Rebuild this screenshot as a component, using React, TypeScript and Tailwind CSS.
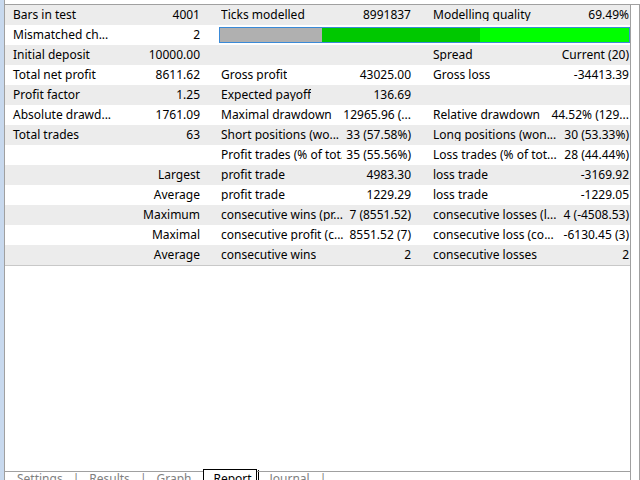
const rows: [string, string, string, string, string, string, boolean][] = [
  ["Bars in test", "4001", "Ticks modelled", "8991837", "Modelling quality", "69.49%", true],
  ["Mismatched ch...", "2", "", "", "", "", false],
  ["Initial deposit", "10000.00", "", "", "Spread", "Current (20)", true],
  ["Total net profit", "8611.62", "Gross profit", "43025.00", "Gross loss", "-34413.39", false],
  ["Profit factor", "1.25", "Expected payoff", "136.69", "", "", true],
  ["Absolute drawd...", "1761.09", "Maximal drawdown", "12965.96 (...", "Relative drawdown", "44.52% (129...", false],
  ["Total trades", "63", "Short positions (wo...", "33 (57.58%)", "Long positions (won...", "30 (53.33%)", true],
  ["", "", "Profit trades (% of tot...", "35 (55.56%)", "Loss trades (% of tot...", "28 (44.44%)", false],
  ["", "Largest", "profit trade", "4983.30", "loss trade", "-3169.92", true],
  ["", "Average", "profit trade", "1229.29", "loss trade", "-1229.05", false],
  ["", "Maximum", "consecutive wins (pr...", "7 (8551.52)", "consecutive losses (l...", "4 (-4508.53)", true],
  ["", "Maximal", "consecutive profit (c...", "8551.52 (7)", "consecutive loss (co...", "-6130.45 (3)", false],
  ["", "Average", "consecutive wins", "2", "consecutive losses", "2", true],
];

export default function App() {
  return (
    <div className="w-[640px] h-[480px] flex bg-white overflow-hidden text-[12px] text-black whitespace-nowrap" style={{ fontFamily: '"Noto Sans", "Liberation Sans", sans-serif' }}>
      <div className="w-[5px] bg-[#c8d9ee] border-r border-[#a0a0a0]" />
      <div className="flex-1 flex flex-col">
        <div className="h-[5px] bg-white border-b border-[#a0a0a0]" />
        <div className="flex-1 flex">
          <div className="w-[626px] border-r border-[#a0a0a0] flex flex-col">
            {rows.map((r, i) => (
              <div key={i} className={`h-[20px] flex items-center leading-none ${r[6] ? "bg-[#ececec]" : "bg-white"}`}>
                <div className="w-[204px] shrink-0 flex justify-between pl-[8px] pr-[9px]">
                  <span>{r[0]}</span><span>{r[1]}</span>
                </div>
                {i === 1 ? (
                  <div className="w-[418px] h-[16px] ml-[10px] border border-[#3a8ad8] flex">
                    <div className="w-[102px] bg-[#b0b0b0]" />
                    <div className="w-[158px] bg-[#00c800]" />
                    <div className="flex-1 bg-[#00ff00]" />
                  </div>
                ) : (
                  <>
                    <div className="w-[212px] shrink-0 flex justify-between gap-1 pl-[12px] pr-[10px] overflow-hidden">
                      <span className="overflow-hidden">{r[2]}</span><span>{r[3]}</span>
                    </div>
                    <div className="w-[210px] shrink-0 flex justify-between gap-1 pl-[12px] pr-[2px] overflow-hidden">
                      <span className="overflow-hidden">{r[4]}</span><span>{r[5]}</span>
                    </div>
                  </>
                )}
              </div>
            ))}
            <div className="border-t border-[#c8c8c8] flex-1" />
            <div className="h-[10px] flex items-start text-[#808080] relative">
              <div className="absolute left-0 right-0 top-[1px] h-[1px] bg-[#a0a0a0]" />
              <div className="flex pt-[3px] pl-[12px] gap-[10px] leading-none">
                <span>Settings</span><span>|</span><span>Results</span><span>|</span><span>Graph</span>
              </div>
              <div className="relative -top-[1px] ml-[12px] h-[12px] w-[54px] bg-white border border-black border-b-0 text-black pl-[9px] pt-[3px] leading-none">Report</div>
              <div className="flex pt-[3px] pl-[10px] gap-[10px] leading-none border-l border-black ml-[1px]">
                <span>Journal</span><span>|</span>
              </div>
            </div>
          </div>
          <div className="flex-1 bg-white border-r border-[#a0a0a0]" />
        </div>
      </div>
    </div>
  );
}
